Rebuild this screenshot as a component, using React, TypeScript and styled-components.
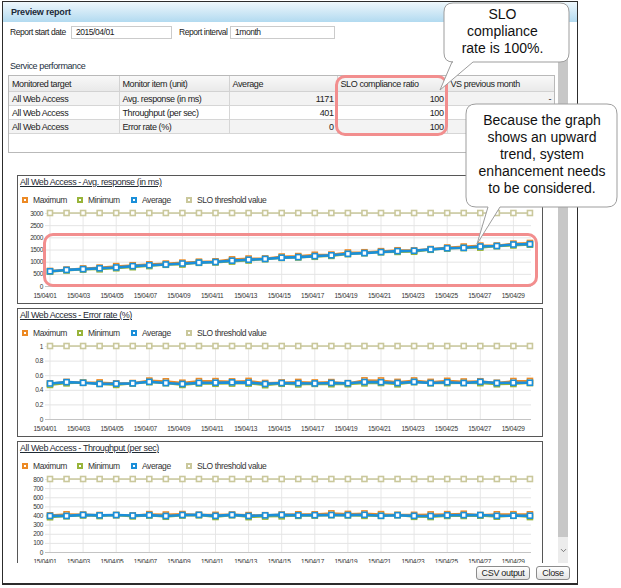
import React from 'react'
import styled, { createGlobalStyle } from 'styled-components'
import { ChevronDown, ChevronUp } from 'lucide-react'

const FONT = `'Liberation Sans', Arial, sans-serif`

const GlobalStyle = createGlobalStyle`
  html, body {
    margin: 0;
    padding: 0;
    background: #fff;
  }
  body {
    font-family: ${FONT};
    color: #222;
  }
`

const COLORS = {
  max: '#ec8a25',
  min: '#98b43a',
  avg: '#1b8fd9',
  slo: '#cac89c',
}

const Stage = styled.div`
  position: relative;
  width: 621px;
  height: 588px;
  overflow: hidden;
  padding: 1px 0 0 2px;
  box-sizing: border-box;
`

const Window = styled.div`
  width: 576px;
  height: 584px;
  box-sizing: border-box;
  border: 1px solid #2c2c2c;
  border-bottom-width: 2px;
  display: flex;
  flex-direction: column;
  background: #fff;
  letter-spacing: -0.4px;
  white-space: nowrap;
`

const TitleBar = styled.div`
  height: 20px;
  flex: none;
  display: flex;
  align-items: center;
  padding-left: 8px;
  background: linear-gradient(#eef7fc, #b2daf0);
  font: bold 9px ${FONT};
  letter-spacing: -0.2px;
  color: #1c2a38;
`

const ScrollArea = styled.div`
  flex: none;
  height: 541px;
  display: flex;
`

const Content = styled.div`
  width: 555px;
  flex: none;
  overflow: hidden;
  padding: 3px 0 0 5px;
  box-sizing: border-box;
`

const ParamRow = styled.div`
  display: flex;
  align-items: center;
  height: 14px;
  padding-left: 2px;
  font-size: 8.5px;
  letter-spacing: -0.45px;
`

const ParamLabel = styled.span<{ $w: number; $gap?: number }>`
  width: ${(p) => p.$w}px;
  margin-left: ${(p) => p.$gap ?? 0}px;
  flex: none;
`

const ParamInput = styled.div<{ $w: number }>`
  width: ${(p) => p.$w}px;
  height: 13px;
  box-sizing: border-box;
  border: 1px solid #cbcbcb;
  padding-left: 4px;
  line-height: 11px;
`

const SectionLabel = styled.div`
  margin-top: 21px;
  height: 12px;
  line-height: 12px;
  padding-left: 2px;
  font-size: 9px;
  color: #1d2f40;
`

const TableBox = styled.div`
  margin-top: 3px;
  width: 547px;
  height: 78px;
  box-sizing: border-box;
  border: 1px solid #b9b9b9;
`

const Table = styled.table`
  border-collapse: collapse;
  table-layout: fixed;
  width: 545px;
  font-size: 9px;
`

const HeadCell = styled.th`
  height: 15px;
  padding: 0 3px;
  text-align: left;
  font-weight: normal;
  background: linear-gradient(#f8f8f8, #e9e9e9);
  border-right: 1px solid #d2d2d2;
  border-bottom: 1px solid #d2d2d2;
  &:last-child {
    border-right: none;
  }
`

const BodyRow = styled.tr<{ $shade: boolean }>`
  background: ${(p) => (p.$shade ? '#f3f3f3' : '#fff')};
`

const Cell = styled.td<{ $right?: boolean }>`
  height: 13px;
  padding: 0 3px;
  text-align: ${(p) => (p.$right ? 'right' : 'left')};
  overflow: hidden;
  border-right: 1px solid #d6d6d6;
  border-bottom: 1px solid #d6d6d6;
  &:last-child {
    border-right: none;
  }
`

const Charts = styled.div`
  margin: 22px 0 0 9px;
  display: flex;
  flex-direction: column;
  gap: 4px;
`

const Panel = styled.div`
  width: 526px;
  height: 129px;
  flex: none;
  box-sizing: border-box;
  border: 1px solid #575757;
  overflow: hidden;
`

const ChartTitle = styled.div`
  height: 12px;
  line-height: 12px;
  padding-left: 2px;
  font-size: 9px;
  text-decoration: underline;
  color: #1f2a33;
`

const Legend = styled.div`
  margin-top: 6px;
  height: 12px;
  padding-left: 4px;
  display: grid;
  grid-template-columns: 55px 54px 55px auto;
  align-items: center;
  font-size: 8.5px;
  color: #333;
`

const LegendItem = styled.div`
  display: flex;
  align-items: center;
  gap: 5px;
`

const LegendMark = styled.span<{ $color: string }>`
  width: 6px;
  height: 6px;
  box-sizing: border-box;
  border: 2px solid ${(p) => p.$color};
  background: #fff;
`

const ScrollBar = styled.div`
  width: 10px;
  flex: none;
  margin-right: 9px;
  display: flex;
  flex-direction: column;
  background: #e6e6e6;
`

const ScrollButton = styled.div<{ $h: number }>`
  height: ${(p) => p.$h}px;
  flex: none;
  display: flex;
  align-items: center;
  justify-content: center;
  color: #555;
  background: #ececec;
`

const Thumb = styled.div`
  flex: 1;
  background: #c7c7c7;
`

const Footer = styled.div`
  flex: 1;
  display: flex;
  align-items: center;
  justify-content: flex-end;
  gap: 6px;
  padding-right: 7px;
`

const Button = styled.button<{ $w: number }>`
  width: ${(p) => p.$w}px;
  height: 14px;
  padding: 0;
  border: 1px solid #8c8c8c;
  border-radius: 3px;
  background: linear-gradient(#ffffff, #e4e4e4);
  font: 9px ${FONT};
  letter-spacing: -0.3px;
  color: #222;
`

const Highlight = styled.div<{ $x: number; $y: number; $w: number; $h: number }>`
  position: absolute;
  left: ${(p) => p.$x}px;
  top: ${(p) => p.$y}px;
  width: ${(p) => p.$w}px;
  height: ${(p) => p.$h}px;
  box-sizing: border-box;
  border: 3px solid #f28e8e;
  border-radius: 10px;
  pointer-events: none;
`

const BubbleLayer = styled.svg`
  position: absolute;
  left: 0;
  top: 0;
  pointer-events: none;
`

const BubbleText = styled.div<{ $x: number; $y: number; $w: number }>`
  position: absolute;
  left: ${(p) => p.$x}px;
  top: ${(p) => p.$y}px;
  width: ${(p) => p.$w}px;
  text-align: center;
  font: 14px/17px 'Liberation Sans', Arial, sans-serif;
  color: #111;
`

// --- chart data ---

const noise = (i: number, s: number) => {
  const v = Math.sin(i * 12.9898 + s * 78.233) * 43758.5453
  return v - Math.floor(v)
}

const DAYS = Array.from({ length: 30 }, (_, i) => i)

type Series = { max: number[]; min: number[]; avg: number[]; slo: number }

const responseSeries: Series = (() => {
  const avg = DAYS.map((i) => 615 + i * 38.5 + (noise(i, 1) - 0.5) * 30)
  return {
    avg,
    max: avg.map((v, i) => v + 12 + noise(i, 2) * 45),
    min: avg.map((v, i) => v - 8 - noise(i, 3) * 40),
    slo: 3000,
  }
})()

const errorSeries: Series = (() => {
  const avg = DAYS.map((i) => 0.495 + (noise(i, 4) - 0.5) * 0.03)
  return {
    avg,
    max: avg.map((v, i) => v + noise(i, 5) * 0.025),
    min: avg.map((v, i) => v - noise(i, 6) * 0.02),
    slo: 1,
  }
})()

const throughputSeries: Series = (() => {
  const avg = DAYS.map((i) => 401 + (noise(i, 7) - 0.5) * 14)
  return {
    avg,
    max: avg.map((v, i) => v + noise(i, 8) * 18),
    min: avg.map((v, i) => v - noise(i, 9) * 16),
    slo: 800,
  }
})()

const SVG_W = 524
const SVG_H = 95
const X0 = 32
const DX = 16.55
const Y_TOP = 7
const Y_BOT = 80

type ChartProps = {
  title: string
  max: number
  steps: number
  fmt: (v: number) => string
  series: Series
}

const Chart = ({ title, max, steps, fmt, series }: ChartProps) => {
  const y = (v: number) => Y_BOT - (v / max) * (Y_BOT - Y_TOP)
  const x = (i: number) => X0 + i * DX
  const ticks = Array.from({ length: steps + 1 }, (_, k) => (max / steps) * k)
  const pts = (vals: number[]) => vals.map((v, i) => `${x(i)},${y(v)}`).join(' ')
  const lines: { key: string; vals: number[]; color: string; width: number }[] = [
    { key: 'slo', vals: DAYS.map(() => series.slo), color: COLORS.slo, width: 1.6 },
    { key: 'max', vals: series.max, color: COLORS.max, width: 2 },
    { key: 'min', vals: series.min, color: COLORS.min, width: 2 },
    { key: 'avg', vals: series.avg, color: COLORS.avg, width: 2.6 },
  ]

  return (
    <Panel>
      <ChartTitle>{title}</ChartTitle>
      <Legend>
        <LegendItem>
          <LegendMark $color={COLORS.max} />
          Maximum
        </LegendItem>
        <LegendItem>
          <LegendMark $color={COLORS.min} />
          Minimum
        </LegendItem>
        <LegendItem>
          <LegendMark $color={COLORS.avg} />
          Average
        </LegendItem>
        <LegendItem>
          <LegendMark $color={COLORS.slo} />
          SLO threshold value
        </LegendItem>
      </Legend>
      <svg width={SVG_W} height={SVG_H} style={{ display: 'block' }}>
        {DAYS.filter((i) => i % 2 === 0).map((i) => (
          <line key={i} x1={x(i)} x2={x(i)} y1={Y_TOP - 3} y2={Y_BOT} stroke='#e7e7e7' />
        ))}
        {ticks.map((t) => (
          <g key={t}>
            <line
              x1={27}
              x2={513}
              y1={y(t) + 0.5}
              y2={y(t) + 0.5}
              stroke={t === 0 ? '#c4c4c4' : '#e4e4e4'}
            />
            <text
              x={25}
              y={y(t) + 2.5}
              textAnchor='end'
              fontSize={6.5}
              fontFamily={FONT}
              fill='#333'
            >
              {fmt(t)}
            </text>
          </g>
        ))}
        {lines.map((l) => (
          <g key={l.key}>
            <polyline
              points={pts(l.vals)}
              fill='none'
              stroke={l.color}
              strokeWidth={l.width}
              strokeLinejoin='round'
            />
            {l.vals.map((v, i) => (
              <rect
                key={i}
                x={x(i) - 2.5}
                y={y(v) - 2.5}
                width={5}
                height={5}
                fill='#fff'
                stroke={l.color}
                strokeWidth={1.6}
              />
            ))}
          </g>
        ))}
        {DAYS.filter((i) => i % 2 === 0).map((i) => (
          <text
            key={i}
            x={x(i) - 5 + i * 0.17}
            y={92}
            textAnchor='middle'
            fontSize={6.5}
            letterSpacing={-0.3}
            fontFamily={FONT}
            fill='#333'
          >
            {`15/04/${String(i + 1).padStart(2, '0')}`}
          </text>
        ))}
      </svg>
    </Panel>
  )
}

const rows = [
  { target: 'All Web Access', item: 'Avg. response (in ms)', avg: '1171', ratio: '100', vs: '-' },
  { target: 'All Web Access', item: 'Throughput (per sec)', avg: '401', ratio: '100', vs: '' },
  { target: 'All Web Access', item: 'Error rate (%)', avg: '0', ratio: '100', vs: '' },
]

const bubblePath = (
  bx: number,
  by: number,
  w: number,
  h: number,
  r: number,
  a: number,
  b: number,
  tx: number,
  ty: number,
) =>
  `M${bx + r},${by} H${bx + w - r} Q${bx + w},${by} ${bx + w},${by + r} V${by + h - r} ` +
  `Q${bx + w},${by + h} ${bx + w - r},${by + h} H${b} L${tx},${ty} L${a},${by + h} ` +
  `H${bx + r} Q${bx},${by + h} ${bx},${by + h - r} V${by + r} Q${bx},${by} ${bx + r},${by} Z`

const App = () => {
  return (
    <Stage>
      <GlobalStyle />
      <Window>
        <TitleBar>Preview report</TitleBar>
        <ScrollArea>
          <Content>
            <ParamRow>
              <ParamLabel $w={61}>Report start date</ParamLabel>
              <ParamInput $w={101}>2015/04/01</ParamInput>
              <ParamLabel $w={51} $gap={7}>
                Report interval
              </ParamLabel>
              <ParamInput $w={105}>1month</ParamInput>
            </ParamRow>
            <SectionLabel>Service performance</SectionLabel>
            <TableBox>
              <Table>
                <colgroup>
                  <col style={{ width: 110 }} />
                  <col style={{ width: 110 }} />
                  <col style={{ width: 108 }} />
                  <col style={{ width: 110 }} />
                  <col style={{ width: 107 }} />
                </colgroup>
                <thead>
                  <tr>
                    <HeadCell>Monitored target</HeadCell>
                    <HeadCell>Monitor item (unit)</HeadCell>
                    <HeadCell>Average</HeadCell>
                    <HeadCell>SLO compliance ratio</HeadCell>
                    <HeadCell>VS previous month</HeadCell>
                  </tr>
                </thead>
                <tbody>
                  {rows.map((r, i) => (
                    <BodyRow key={r.item} $shade={i % 2 === 0}>
                      <Cell>{r.target}</Cell>
                      <Cell>{r.item}</Cell>
                      <Cell $right>{r.avg}</Cell>
                      <Cell $right>{r.ratio}</Cell>
                      <Cell $right>{r.vs}</Cell>
                    </BodyRow>
                  ))}
                </tbody>
              </Table>
            </TableBox>
            <Charts>
              <Chart
                title='All Web Access - Avg. response (in ms)'
                max={3000}
                steps={6}
                fmt={(v) => String(Math.round(v))}
                series={responseSeries}
              />
              <Chart
                title='All Web Access - Error rate (%)'
                max={1}
                steps={5}
                fmt={(v) => String(Math.round(v * 10) / 10)}
                series={errorSeries}
              />
              <Chart
                title='All Web Access - Throughput (per sec)'
                max={800}
                steps={8}
                fmt={(v) => String(Math.round(v))}
                series={throughputSeries}
              />
            </Charts>
          </Content>
          <ScrollBar>
            <ScrollButton $h={14}>
              <ChevronUp size={9} strokeWidth={2} />
            </ScrollButton>
            <Thumb />
            <ScrollButton $h={26}>
              <ChevronDown size={9} strokeWidth={2} />
            </ScrollButton>
          </ScrollBar>
        </ScrollArea>
        <Footer>
          <Button $w={54}>CSV output</Button>
          <Button $w={34}>Close</Button>
        </Footer>
      </Window>

      <Highlight $x={335} $y={75} $w={113} $h={61} />
      <Highlight $x={43} $y={233} $w={495} $h={54} />

      <BubbleLayer width={621} height={588}>
        <path
          d={bubblePath(444, 3, 125, 59, 9, 452, 473, 440, 90)}
          fill='#fff'
          stroke='#9d9d9d'
          strokeWidth={1}
        />
        <path
          d={bubblePath(466, 104, 151, 103, 10, 488, 500, 477, 244)}
          fill='#fff'
          stroke='#9d9d9d'
          strokeWidth={1}
        />
      </BubbleLayer>
      <BubbleText $x={444} $y={6} $w={117}>
        SLO
        <br />
        compliance
        <br />
        rate is 100%.
      </BubbleText>
      <BubbleText $x={466} $y={112} $w={152}>
        Because the graph
        <br />
        shows an upward
        <br />
        trend, system
        <br />
        enhancement needs
        <br />
        to be considered.
      </BubbleText>
    </Stage>
  )
}

export default App
